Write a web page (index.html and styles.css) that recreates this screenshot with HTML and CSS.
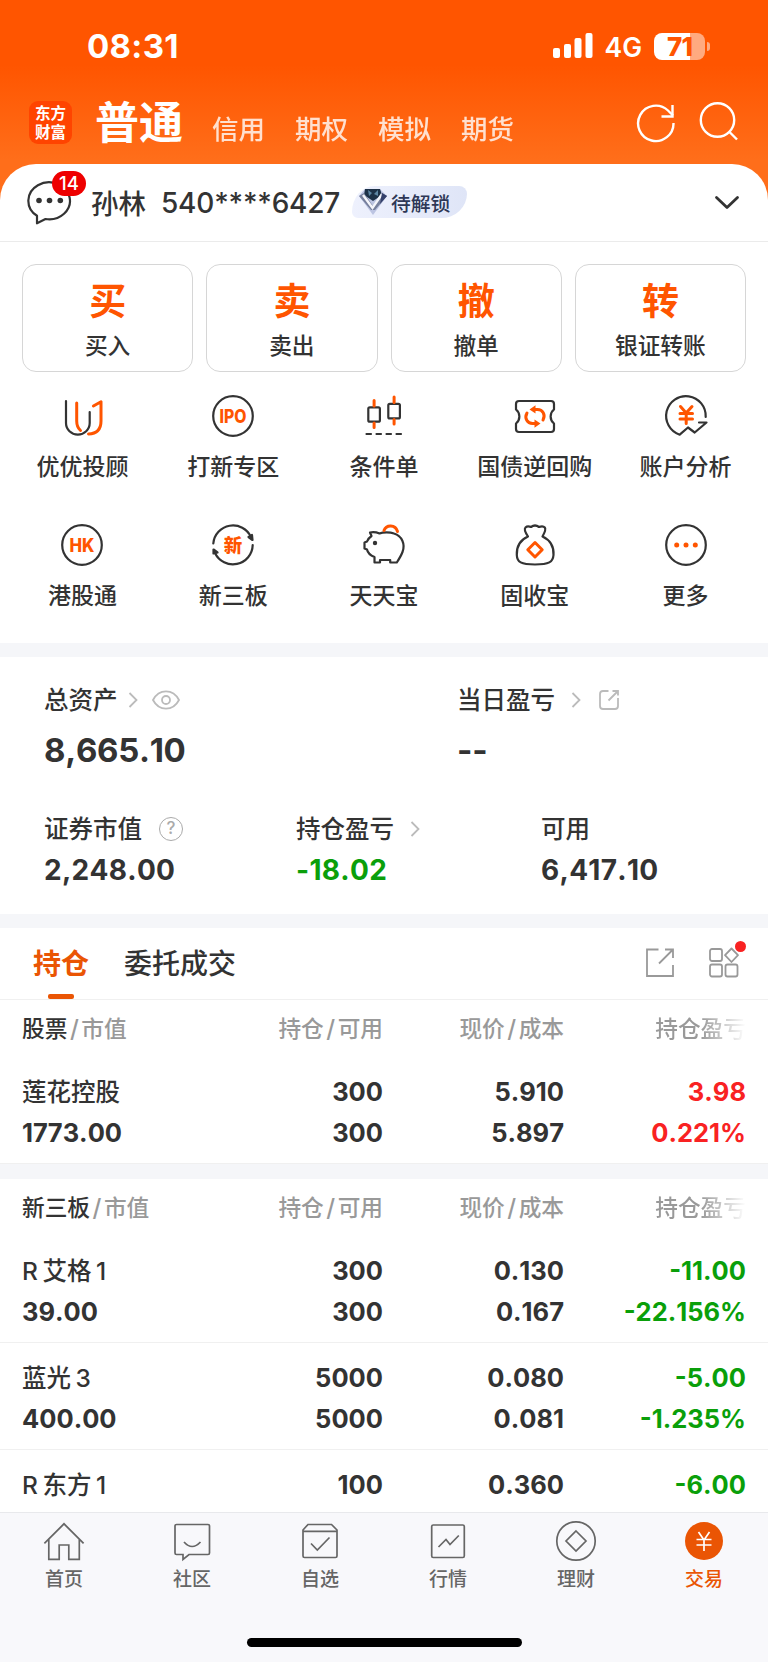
FILE: index.html
```html
<!DOCTYPE html>
<html lang="zh-CN">
<head>
    <meta charset="UTF-8">
    <meta name="viewport" content="width=device-width, initial-scale=1.0">
    <title>交易</title>
    <link rel="stylesheet" href="styles.css">
</head>
<body>
    <div class="app">
        <div class="status-bar">
            <span class="time">08:31</span>
            <div class="status-right">
                <svg class="signal" width="40" height="26" viewBox="0 0 40 26" fill="#fff">
                    <rect x="0" y="15" width="7" height="10" rx="2"/>
                    <rect x="11" y="11" width="7" height="14" rx="2"/>
                    <rect x="21.5" y="5" width="7" height="20" rx="2"/>
                    <rect x="32.5" y="0" width="7" height="25" rx="2"/>
                </svg>
                <span class="network">4G</span>
                <div class="battery"><span>71</span></div>
                <div class="battery-cap"></div>
            </div>
        </div>

        <div class="nav">
            <div class="logo"><span>东方</span><span>财富</span></div>
            <h1>普通</h1>
            <div class="nav-tabs">
                <span>信用</span><span>期权</span><span>模拟</span><span>期货</span>
            </div>
            <svg class="nav-refresh" width="42" height="42" viewBox="0 0 42 42" fill="none" stroke="#fff" stroke-width="2.4">
                <path d="M38.500 22A17.700 17.700 0 1 1 33 9.500L38 14.500"/>
                <path d="M37.500 4V15.500H26.500"/>
            </svg>
            <svg width="42" height="42" viewBox="0 0 42 42" fill="none" stroke="#fff" stroke-width="2.4">
                <circle cx="19.5" cy="19" r="16.7"/>
                <path d="M31 30.5L39 38.5"/>
            </svg>
        </div>

        <div class="sheet">
            <div class="account">
                <div class="message">
                    <svg width="46" height="44" viewBox="0 0 46 44" fill="none" stroke="#333" stroke-width="2.2">
                        <path d="M10 34.800A20.800 18.500 0 1 1 18.500 38L10 42.300Z" stroke-linejoin="round"/>
                        <g fill="#333" stroke="none"><circle cx="12" cy="19.5" r="2.8"/><circle cx="22.500" cy="19.5" r="2.8"/><circle cx="33.300" cy="19.5" r="2.8"/></g>
                    </svg>
                    <span class="badge">14</span>
                </div>
                <span class="name">孙林</span>
                <span class="number">540****6427</span>
                <div class="level">
                    <svg width="30" height="30" viewBox="0 0 30 30">
                        <path d="M7 2H22L29 9L15 28L1 9Z" fill="#bcc4e2"/>
                        <path d="M7 2H22L24 8L15 14L6 8Z" fill="#1d3147"/>
                        <path d="M10 3L14 6L11 9ZM20 3L16 7L20 9Z" fill="#5d86a3"/>
                        <path d="M1 9L6 6L15 19L24 6L29 9L17 23H13Z" fill="#767f9c"/>
                        <path d="M5 8L14.500 21L24 7" stroke="#f4f5fb" stroke-width="2.400" fill="none"/>
                        <path d="M24 6L29 9L22 17Z" fill="#34406b"/>
                    </svg>
                    <span>待解锁</span>
                </div>
                <svg class="arrow-down" width="26" height="16" viewBox="0 0 26 16" fill="none" stroke="#333" stroke-width="2.8" stroke-linecap="round" stroke-linejoin="round">
                    <path d="M2.5 2.5L13 12.5L23.5 2.5"/>
                </svg>
            </div>

            <div class="trade">
                <div class="trade-card"><b>买</b><span>买入</span></div>
                <div class="trade-card"><b>卖</b><span>卖出</span></div>
                <div class="trade-card"><b>撤</b><span>撤单</span></div>
                <div class="trade-card"><b>转</b><span>银证转账</span></div>
            </div>

            <div class="menu">
                <div class="menu-item">
                    <svg viewBox="0 0 48 48">
                        <path d="M8 9V31A11.8 11.5 0 0 0 31.7 31V20"/>
                        <path class="hot" d="M18.7 11V29Q18.7 35 22.5 38.5M35.4 14L43 9.7V29Q43 41.5 30.5 42"/>
                    </svg>
                    <span>优优投顾</span>
                </div>
                <div class="menu-item">
                    <svg viewBox="0 0 48 48">
                        <circle cx="24" cy="24" r="19.8"/>
                        <text x="24" y="30.5" textLength="27" lengthAdjust="spacingAndGlyphs">IPO</text>
                    </svg>
                    <span>打新专区</span>
                </div>
                <div class="menu-item">
                    <svg viewBox="0 0 48 48">
                        <rect x="8.3" y="15.3" width="11.6" height="14.4" rx="1.5"/>
                        <rect x="28.3" y="11.8" width="11.6" height="14.6" rx="1.5"/>
                        <path d="M6.500 42H11M16.500 42H21M26.500 42H31M36.500 42H41"/>
                        <path class="hot" d="M14.1 8.5V14M14.1 31V35.5M34.1 5V10.5M34.1 27.5V32"/>
                    </svg>
                    <span>条件单</span>
                </div>
                <div class="menu-item">
                    <svg viewBox="0 0 48 48">
                        <path d="M8 9H40Q43 9 43 12V17.500C38.500 21 38.500 28 43 31.500V37Q43 40 40 40H8Q5 40 5 37V31.500C9.500 28 9.500 21 5 17.500V12Q5 9 8 9Z"/>
                        <path class="hot" d="M16 21C13 26.500 16.500 31.500 21.500 31.500H24M32 28C35 22.500 31.500 17.500 26.500 17.500H24"/>
                        <path class="hot-fill" d="M24.500 13.300V21.500L18.500 17.500ZM23.500 27.500V35.700L29.500 31.500Z"/>
                    </svg>
                    <span>国债逆回购</span>
                </div>
                <div class="menu-item">
                    <svg viewBox="0 0 48 48">
                        <path d="M43.700 25A19.800 19.800 0 1 0 17.700 42.700L26 35.500L32.700 40.500L44.500 30.500H37"/>
                        <path class="hot" d="M18.500 14.500L24.200 21L30 14.500M24.200 21V31.500M18 21.500H30.500M18 27H30.500"/>
                    </svg>
                    <span>账户分析</span>
                </div>
                <div class="menu-item">
                    <svg viewBox="0 0 48 48">
                        <circle cx="24" cy="24" r="19.8"/>
                        <text x="24" y="30.5" textLength="25" lengthAdjust="spacingAndGlyphs">HK</text>
                    </svg>
                    <span>港股通</span>
                </div>
                <div class="menu-item">
                    <svg viewBox="0 0 48 48">
                        <path d="M4.300 22.500A19.800 19.800 0 0 1 42 16M43.700 24A19.800 19.800 0 0 1 6 32"/>
                        <path fill="#333" d="M39.500 16L43 14L43.500 19ZM4.500 28.500L8.500 31.500L4.500 32.500Z"/>
                        <text x="24" y="31">新</text>
                    </svg>
                    <span>新三板</span>
                </div>
                <div class="menu-item">
                    <svg viewBox="0 0 48 48">
                        <path d="M10 11.500C14 10.500 16 11 19.500 12.500C23 11 30 11 34 12.500C42 15 45.500 23 42.500 31Q41 35 36.800 41.500H30.200V39H20V41.500H14.500V36C9.500 34 7.500 31 7 28.500L4.500 27.500V21.500L7 20.500Q8 17.500 11.500 15Z"/>
                        <path class="hot" d="M24 9.500C26 3.500 35.500 3 37.500 10.500"/>
                        <circle cx="15" cy="22" r="2.200" fill="#333" stroke="none"/>
                    </svg>
                    <span>天天宝</span>
                </div>
                <div class="menu-item">
                    <svg viewBox="0 0 48 48">
                        <path d="M17 15.500C14 11 13 8 14.500 6.500Q16.500 4.500 20 6Q24 3 28 6Q32 4.500 33.800 6.500C35 8 34 11 31.500 15.500C39 19 43 26 42.500 34C42 41 38 43.500 24 43.500C10 43.500 6 41 5.800 34C5.500 26 9 19 17 15.500Z"/>
                        <path class="hot" d="M24 21.500L31.200 28.700L24 36L16.800 28.700Z"/>
                    </svg>
                    <span>固收宝</span>
                </div>
                <div class="menu-item">
                    <svg viewBox="0 0 48 48">
                        <circle cx="24" cy="24" r="19.8"/>
                        <g class="hot-fill"><circle cx="14.700" cy="24" r="2.500"/><circle cx="24" cy="24" r="2.500"/><circle cx="33.300" cy="24" r="2.500"/></g>
                    </svg>
                    <span>更多</span>
                </div>
            </div>

            <div class="assets">
                <div class="assets-top">
                    <div class="asset">
                        <div class="label">总资产
                            <svg class="more" width="10" height="16" viewBox="0 0 10 16"><path d="M1.500 1L8.500 8L1.500 15"/></svg>
                            <svg class="eye" width="28" height="20" viewBox="0 0 28 20"><path d="M1 10C7 -1.500 21 -1.500 27 10C21 21.500 7 21.500 1 10Z"/><circle cx="14" cy="10" r="4"/></svg>
                        </div>
                        <strong class="big">8,665.10</strong>
                    </div>
                    <div class="asset">
                        <div class="label">当日盈亏
                            <svg class="more day" width="10" height="16" viewBox="0 0 10 16"><path d="M1.500 1L8.500 8L1.500 15"/></svg>
                            <svg class="share" width="22" height="22" viewBox="0 0 22 22"><path d="M10.500 2H5Q2 2 2 5V17Q2 20 5 20H17Q20 20 20 17V9M14.500 2H20V6.500M19.500 2.500L10.500 11.500"/></svg>
                        </div>
                        <strong class="big">--</strong>
                    </div>
                </div>
                <div class="assets-bottom">
                    <div class="asset">
                        <div class="label">证券市值 <span class="help">?</span></div>
                        <strong>2,248.00</strong>
                    </div>
                    <div class="asset">
                        <div class="label">持仓盈亏
                            <svg class="more" width="10" height="16" viewBox="0 0 10 16"><path d="M1.500 1L8.500 8L1.500 15"/></svg>
                        </div>
                        <strong class="down">-18.02</strong>
                    </div>
                    <div class="asset">
                        <div class="label">可用</div>
                        <strong>6,417.10</strong>
                    </div>
                </div>
            </div>

            <div class="tabs">
                <span class="tab active">持仓</span>
                <span class="tab">委托成交</span>
                <svg class="tab-share" width="30" height="30" viewBox="0 0 30 30"><path d="M13.500 1.500H2V28H28V17M20 1.500H28V10M28 1.500L14 15.500"/></svg>
                <div class="widgets">
                    <svg width="32" height="32" viewBox="0 0 32 32"><rect x="2" y="2" width="12" height="12" rx="2"/><rect x="2" y="17.500" width="12" height="12" rx="2"/><rect x="17.500" y="17.500" width="12" height="12" rx="2"/><path d="M23.500 1.500L30 8.200L23.500 15L17 8.200Z" stroke-linejoin="round"/></svg>
                </div>
            </div>

            <div class="holdings">
                <div class="head"><span><em>股票</em><i>/</i>市值</span><span>持仓<i>/</i>可用</span><span>现价<i>/</i>成本</span><span class="fade">持仓盈亏</span></div>
                <div class="stock">
                    <div><span class="title">莲花控股</span><span>1773.00</span></div>
                    <div><span>300</span><span>300</span></div>
                    <div><span>5.910</span><span>5.897</span></div>
                    <div class="up"><span>3.98</span><span>0.221%</span></div>
                </div>
            </div>

            <div class="holdings board">
                <div class="head"><span><em>新三板</em><i>/</i>市值</span><span>持仓<i>/</i>可用</span><span>现价<i>/</i>成本</span><span class="fade">持仓盈亏</span></div>
                <div class="stock">
                    <div><span class="title">R 艾格 1</span><span>39.00</span></div>
                    <div><span>300</span><span>300</span></div>
                    <div><span>0.130</span><span>0.167</span></div>
                    <div class="down"><span>-11.00</span><span>-22.156%</span></div>
                </div>
                <div class="stock">
                    <div><span class="title">蓝光 3</span><span>400.00</span></div>
                    <div><span>5000</span><span>5000</span></div>
                    <div><span>0.080</span><span>0.081</span></div>
                    <div class="down"><span>-5.00</span><span>-1.235%</span></div>
                </div>
                <div class="stock">
                    <div><span class="title">R 东方 1</span></div>
                    <div><span>100</span></div>
                    <div><span>0.360</span></div>
                    <div class="down"><span>-6.00</span></div>
                </div>
            </div>
        </div>

        <div class="tab-bar">
            <div class="tab-links">
                <div class="tab-link">
                    <svg viewBox="0 0 44 44"><path d="M2.400 24.300L22 4.800L41.600 24.300M6.800 20.500V40.400H17.200V26H26.800V40.400H37.300V20.500"/></svg>
                    <span>首页</span>
                </div>
                <div class="tab-link">
                    <svg viewBox="0 0 44 44"><path d="M6.500 5.500H38Q39.500 5.500 39.500 7V34Q39.500 35.500 38 35.500H19L13 40.500V35.500H6.500Q5 35.500 5 34V7Q5 5.500 6.500 5.500ZM14 23Q22 32 30.500 23"/></svg>
                    <span>社区</span>
                </div>
                <div class="tab-link">
                    <svg viewBox="0 0 44 44"><path d="M10 5.500H33.500L39 11V37Q39 38.500 37.500 38.500H6.500Q5 38.500 5 37V11ZM5.500 12.300H38.500M13 24.500L19.300 31L31.500 18.500"/></svg>
                    <span>自选</span>
                </div>
                <div class="tab-link">
                    <svg viewBox="0 0 44 44"><rect x="5.700" y="6" width="32.600" height="32.500" rx="1.500"/><path d="M12.500 28L20 20.500L24 25.500L32.800 16.500"/></svg>
                    <span>行情</span>
                </div>
                <div class="tab-link">
                    <svg viewBox="0 0 44 44"><circle cx="22" cy="22" r="19.200"/><path d="M22 12L32 22L22 32L12 22Z"/></svg>
                    <span>理财</span>
                </div>
                <div class="tab-link current">
                    <svg viewBox="0 0 44 44"><circle cx="22" cy="22" r="19"/><path d="M16.500 13L22 21L27.500 13M22 21V32M14.500 20.500H29.500M14.500 26H29.500"/></svg>
                    <span>交易</span>
                </div>
            </div>
            <div class="home-indicator"></div>
        </div>
    </div>
</body>
</html>
```
FILE: styles.css
```css
* {
    box-sizing: border-box;
}
body {
    margin: 0;
    color: #333;
    font-family: Inter, "Noto Sans CJK SC", sans-serif;
    font-weight: 500;
}
h1, strong, b, em, i {
    margin: 0;
    font-style: normal;
    font-weight: inherit;
}
svg {
    display: block;
    flex: none;
}
.app {
    display: flex;
    flex-direction: column;
    width: 768px;
    height: 1662px;
    overflow: hidden;
    background: linear-gradient(#ff5500 0, #ff5500 65px, #ff6e1a 160px, #ff6e1a 100%);
}

/* status bar */
.status-bar {
    display: flex;
    flex: none;
    align-items: center;
    justify-content: space-between;
    height: 92px;
    padding: 0 58px 0 87px;
    color: #fff;
}
.time {
    font-size: 33px;
    font-weight: 700;
    letter-spacing: 0.3px;
}
.status-right {
    display: flex;
    align-items: center;
}
.network {
    margin: 2px 12px 0;
    font-size: 26.5px;
    font-weight: 600;
}
.battery {
    width: 51px;
    height: 27px;
    border-radius: 8px;
    background: linear-gradient(90deg, #fff 36px, #ffaa80 36px);
    color: #ff5500;
    font-size: 26px;
    font-weight: 800;
    line-height: 27px;
    letter-spacing: -1px;
    text-align: center;
}
.battery-cap {
    width: 3px;
    height: 9px;
    margin-left: 2px;
    border-radius: 0 4px 4px 0;
    background: #ffaa80;
}

/* navigation */
.nav {
    display: flex;
    flex: none;
    align-items: center;
    height: 60px;
    margin-bottom: 11.5px;
    padding: 0 28px 0 29px;
    color: #fff;
}
.logo {
    display: flex;
    flex-direction: column;
    width: 43px;
    height: 43px;
    padding-top: 2px;
    border-radius: 9px;
    background: #ff4400;
    font-family: "Noto Sans CJK SC", sans-serif;
    font-size: 15.5px;
    font-weight: 700;
    line-height: 19px;
    text-align: center;
}
.nav h1 {
    margin-left: 23px;
    padding-top: 1px;
    font-size: 44px;
    font-weight: 700;
    line-height: 60px;
}
.nav-tabs {
    display: flex;
    gap: 30px;
    margin: 10px auto 0 29px;
    font-size: 26.5px;
    opacity: 0.8;
}
.nav-refresh {
    margin-right: 21px;
}

/* white sheet */
.sheet {
    flex: 1;
    min-height: 0;
    overflow: hidden;
    border-radius: 36px 36px 0 0;
    background: #fff;
}
.account {
    display: flex;
    align-items: center;
    height: 78px;
    padding: 0 28px 0 26px;
    border-bottom: 1px solid #ebebeb;
}
.message {
    position: relative;
    width: 65px;
}
.message svg {
    margin: 1px 0 0 0.5px;
}
.badge {
    position: absolute;
    top: -9px;
    left: 26px;
    width: 34px;
    height: 25px;
    border-radius: 13px;
    background: #ee0000;
    color: #fff;
    font-size: 18.5px;
    line-height: 25px;
    text-align: center;
}
.name {
    width: 70px;
    font-size: 27.5px;
}
.number {
    width: 191px;
    padding-top: 1px;
    font-size: 28px;
    letter-spacing: -0.2px;
}
.level {
    display: flex;
    align-items: center;
    width: 115px;
    height: 32px;
    padding-left: 6px;
    gap: 3px;
    border-radius: 26px 9px 30px 7px / 30px 9px 28px 7px;
    background: linear-gradient(90deg, #eef1fd, #dfe5f7);
    color: #2d3756;
    font-size: 19.8px;
    white-space: nowrap;
}
.arrow-down {
    margin-top: 2px;
    margin-left: auto;
}

/* trade buttons */
.trade {
    display: grid;
    grid-template-columns: repeat(4, 1fr);
    gap: 13px;
    padding: 22px 22px 0;
}
.trade-card {
    display: flex;
    flex-direction: column;
    align-items: center;
    height: 108px;
    border: 1px solid #d6d6d6;
    border-radius: 14px;
    font-size: 22.7px;
    line-height: 34px;
}
.trade-card b {
    margin: 13px 0 3px;
    color: #ff5500;
    font-size: 37px;
    font-weight: 700;
    line-height: 48px;
}

/* shortcut menu */
.menu {
    display: grid;
    grid-template-columns: repeat(5, 1fr);
    grid-auto-rows: 129.5px;
    height: 271px;
    padding: 20px 7px 0;
}
.menu-item {
    display: flex;
    flex-direction: column;
    align-items: center;
    font-size: 23px;
    line-height: 34px;
    white-space: nowrap;
}
.menu-item svg {
    width: 48px;
    height: 48px;
    margin-bottom: 10px;
    fill: none;
    stroke: #333;
    stroke-width: 2.2;
    stroke-linecap: round;
    stroke-linejoin: round;
}
.menu-item .hot {
    stroke: #ff5500;
    stroke-width: 3;
}
.menu-item .hot-fill, .menu-item text {
    fill: #ff5500;
    stroke: none;
}
.menu-item text {
    font-size: 18.5px;
    font-weight: 800;
    text-anchor: middle;
}

/* assets */
.assets {
    height: 285px;
    padding: 25px 44px 0;
    border-top: 14px solid #f5f6f9;
    border-bottom: 14px solid #f5f6f9;
}
.assets-top, .assets-bottom {
    display: flex;
}
.assets-top {
    height: 129px;
}
.assets-top .asset:first-child {
    width: 413px;
}
.assets-bottom .asset:nth-child(1) {
    width: 252px;
}
.assets-bottom .asset:nth-child(2) {
    width: 245px;
}
.label {
    display: flex;
    align-items: center;
    height: 36px;
    font-size: 24.5px;
    line-height: 36px;
}
.label svg, .tabs svg {
    fill: none;
    stroke: #bbb;
    stroke-width: 1.8;
}
.label .more {
    margin-left: 10px;
}
.label .day, .assets-bottom .more {
    margin-left: 16px;
}
.label .eye {
    margin-left: 14px;
}
.label .share {
    margin-left: 17px;
}
.help {
    width: 24px;
    height: 24px;
    margin-left: 17px;
    border: 1.5px solid #aaa;
    border-radius: 50%;
    color: #aaa;
    font-size: 17px;
    line-height: 21px;
    text-align: center;
}
.asset strong {
    display: block;
    margin-top: 1px;
    font-size: 28px;
    font-weight: 750;
    font-kerning: none;
    letter-spacing: 0.3px;
    line-height: 45px;
}
.asset .big {
    margin-top: 10px;
    font-size: 33px;
    letter-spacing: -0.3px;
}
.up {
    color: #f92222;
}
.down {
    color: #0a9f0a;
}

/* holdings */
.tabs {
    display: flex;
    align-items: center;
    height: 72px;
    padding: 0 28px 0 33px;
    border-bottom: 1px solid #f0f0f0;
    font-size: 28px;
}
.tab {
    position: relative;
    margin-right: 35px;
    padding-top: 2px;
    line-height: 69px;
}
.tab.active {
    color: #ea5504;
    font-weight: 700;
}
.tab.active::after {
    content: "";
    position: absolute;
    bottom: 0;
    left: 15px;
    width: 26px;
    height: 5px;
    border-radius: 2px;
    background: #ea5504;
}
.tabs svg {
    stroke: #999;
}
.tabs .tab-share {
    margin-left: auto;
}
.widgets {
    position: relative;
    margin-left: 33px;
}
.widgets::after {
    content: "";
    position: absolute;
    top: -6px;
    right: -6px;
    width: 11px;
    height: 11px;
    border-radius: 50%;
    background: #f92222;
}
.board {
    border-top: 15px solid #f5f6f9;
}
.head, .stock {
    display: grid;
    grid-template-columns: 200px 161px 181px 182px;
    padding: 0 22px;
}
.head {
    height: 57px;
    color: #999;
    font-size: 22.7px;
    line-height: 57px;
    white-space: nowrap;
}
.head em {
    color: #333;
}
.head i {
    margin: 0 2.5px;
    font-size: 24px;
}
.head span:not(:first-child), .stock div:not(:first-child) {
    text-align: right;
}
.head .fade {
    background: linear-gradient(90deg, #999 75%, #fff);
    background-clip: text;
    color: transparent;
}
.stock {
    height: 107px;
    padding-top: 15.5px;
    border-bottom: 1px solid #f0f0f0;
    font-size: 25.5px;
    font-weight: 750;
    font-kerning: none;
    line-height: 40px;
}
.stock span {
    display: block;
    height: 40.5px;
}
.stock .title {
    font-size: 24.5px;
    font-weight: 500;
    word-spacing: -2px;
}

/* bottom bar */
.tab-bar {
    flex: none;
    height: 150px;
    border-top: 1px solid #e8e9ec;
    background: #f8f8fb;
}
.tab-links {
    display: grid;
    grid-template-columns: repeat(6, 1fr);
    height: 125px;
    padding-top: 6px;
}
.tab-link {
    display: flex;
    flex-direction: column;
    align-items: center;
    color: #666;
    font-size: 19px;
    line-height: 33px;
}
.tab-link svg {
    width: 44px;
    height: 44px;
    fill: none;
    stroke: #666;
    stroke-width: 1.7;
}
.current {
    color: #ea5504;
}
.current circle {
    fill: #ea5504;
    stroke: none;
}
.current path {
    stroke: #fff;
}
.home-indicator {
    width: 275px;
    height: 9px;
    margin: 0 auto;
    border-radius: 5px;
    background: #000;
}
```
